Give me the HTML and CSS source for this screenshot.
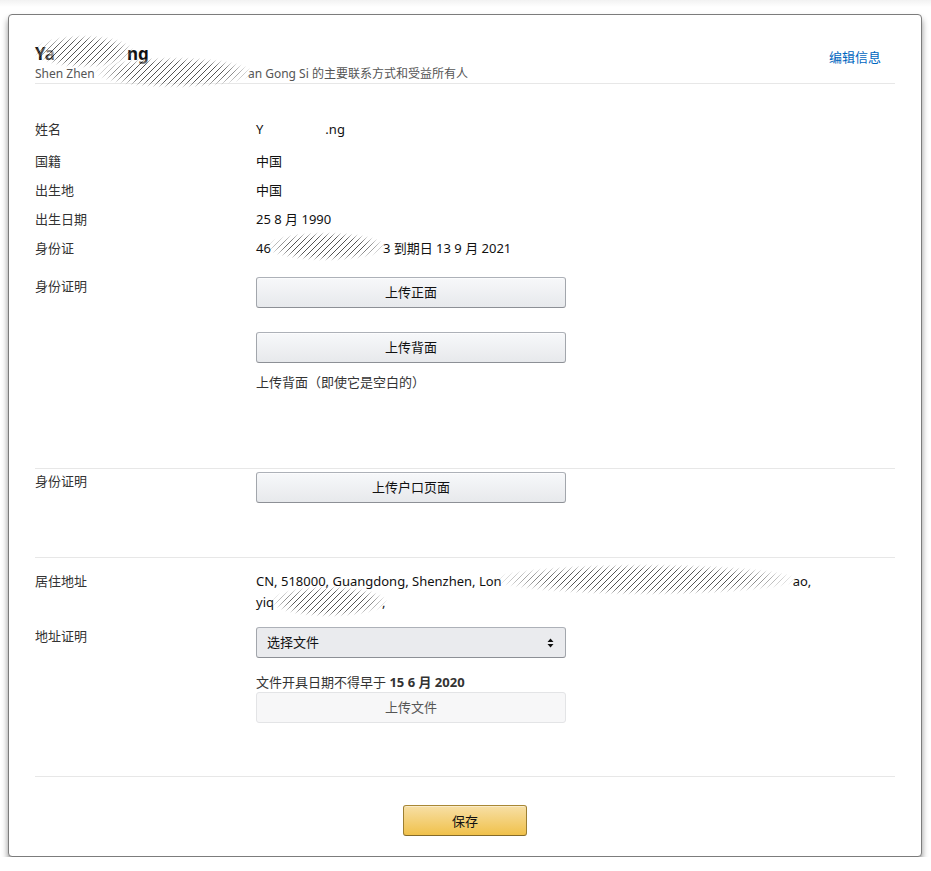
FILE: index.html
```html
<!DOCTYPE html>
<html lang="zh-CN">
<head>
<meta charset="utf-8">
<title>主要联系方式和受益所有人</title>
<link rel="stylesheet" href="styles.css">
</head>
<body>
<div class="card">
  <div class="head">
    <div class="head-text">
      <div class="title">Ya<span class="redact r-title"></span>ng</div>
      <div class="sub">Shen Zhen <span class="redact r-sub"></span>an Gong Si 的主要联系方式和受益所有人</div>
    </div>
    <a class="edit" href="#">编辑信息</a>
  </div>

  <div class="section s1">
    <div class="row r-name">
      <div class="label">姓名</div>
      <div class="value">Y<span class="gap"></span>.ng</div>
    </div>
    <div class="row">
      <div class="label">国籍</div>
      <div class="value">中国</div>
    </div>
    <div class="row">
      <div class="label">出生地</div>
      <div class="value">中国</div>
    </div>
    <div class="row">
      <div class="label">出生日期</div>
      <div class="value">25 8 月 1990</div>
    </div>
    <div class="row r-id">
      <div class="label">身份证</div>
      <div class="value">46<span class="redact r-idnum"></span>3 到期日 13 9 月 2021</div>
    </div>
    <div class="row">
      <div class="label">身份证明</div>
      <div class="value">
        <button class="btn">上传正面</button>
        <button class="btn btn-back">上传背面</button>
        <div class="note">上传背面（即使它是空白的）</div>
      </div>
    </div>
  </div>

  <div class="section s2">
    <div class="row">
      <div class="label">身份证明</div>
      <div class="value">
        <button class="btn">上传户口页面</button>
      </div>
    </div>
  </div>

  <div class="section s3">
    <div class="row r-addr">
      <div class="label">居住地址</div>
      <div class="value">CN, 518000, Guangdong, Shenzhen, Lon<span class="redact r-addr1"></span>ao,<br>yiq<span class="redact r-addr2"></span>,</div>
    </div>
    <div class="row">
      <div class="label">地址证明</div>
      <div class="value">
        <div class="select">
          <span>选择文件</span>
          <svg class="arrows" width="7" height="10" viewBox="0 0 7 10"><path d="M0.5 4 L3.5 0.5 L6.5 4 Z M0.5 6 L3.5 9.5 L6.5 6 Z" fill="#111"/></svg>
        </div>
        <div class="note note-date">文件开具日期不得早于 <b>15 6 月 2020</b></div>
        <button class="btn btn-disabled">上传文件</button>
      </div>
    </div>
  </div>

  <div class="foot">
    <button class="save">保存</button>
  </div>
</div>
</body>
</html>
```

FILE: styles.css
```css
html, body {
  margin: 0;
  padding: 0;
}

body {
  background: linear-gradient(#f2f2f2, #ffffff 7px) no-repeat #ffffff;
  font-family: "Noto Sans", "Noto Sans CJK SC", sans-serif;
  font-size: 13px;
  color: #111;
}

.card {
  margin: 14px 9px 0 8px;
  border: 1px solid #7c7c7c;
  border-radius: 4px;
  background: #fff;
  box-shadow: 0 5px 6px rgba(0, 0, 0, 0.45);
  padding: 0 26px 20px;
}

.head {
  display: flex;
  justify-content: space-between;
  align-items: flex-start;
  padding-top: 28px;
  padding-bottom: 1px;
  border-bottom: 1px solid #e7e7e7;
}

.title {
  font-size: 17px;
  font-weight: 700;
  line-height: 20px;
  color: #111;
}

.sub {
  margin-top: 2px;
  font-size: 12px;
  line-height: 16px;
  color: #555;
}

.edit {
  margin-top: 5px;
  margin-right: 14px;
  line-height: 19px;
  color: #0066c0;
  text-decoration: none;
}

.section {
  border-top: 1px solid #e7e7e7;
}

.head + .section {
  border-top: 0;
}

.s1 {
  padding-top: 36px;
  padding-bottom: 76px;
}

.s2 {
  padding-top: 3px;
  padding-bottom: 54px;
}

.s3 {
  padding-top: 13px;
  padding-bottom: 53px;
}

.row {
  display: grid;
  grid-template-columns: 221px 310px;
  align-items: start;
  line-height: 19px;
  margin-bottom: 10px;
}

.row:last-child {
  margin-bottom: 0;
}

.r-name {
  margin-bottom: 13px;
}

.r-id {
  margin-bottom: 19px;
}

.r-addr {
  grid-template-columns: 221px 1fr;
  line-height: 21px;
  margin-bottom: 14px;
}

.label {
  color: #333;
}

.value {
  color: #111;
}

.gap {
  display: inline-block;
  width: 62px;
}

.btn {
  display: block;
  width: 310px;
  height: 31px;
  margin: 0;
  padding: 0;
  border: 1px solid;
  border-color: #adb1b8 #a2a6ac #8d9096;
  border-radius: 3px;
  background: linear-gradient(#f7f8fa, #e7e9ec);
  box-shadow: inset 0 1px 0 rgba(255, 255, 255, 0.6);
  font-family: inherit;
  font-size: 13px;
  color: #111;
  line-height: 29px;
  text-align: center;
}

.btn-back {
  margin-top: 24px;
}

.note {
  margin-top: 10px;
  color: #333;
}

.btn-disabled {
  background: #f7f7f8;
  border-color: #e3e4e6;
  box-shadow: none;
  color: #555;
}

.note-date {
  margin-top: 15px;
}

.note-date b {
  font-weight: 700;
}

.select {
  display: flex;
  justify-content: space-between;
  align-items: center;
  box-sizing: border-box;
  width: 310px;
  height: 31px;
  padding: 0 11px 0 10px;
  border: 1px solid;
  border-color: #adb1b8 #a2a6ac #8d9096;
  border-radius: 3px;
  background: #eaebee;
  color: #111;
}

.arrows {
  display: block;
}

.foot {
  border-top: 1px solid #e7e7e7;
  padding-top: 28px;
  display: flex;
  justify-content: center;
}

.save {
  width: 124px;
  height: 31px;
  padding: 0;
  border: 1px solid;
  border-color: #a88734 #9c7e31 #846a29;
  border-radius: 3px;
  background: linear-gradient(#f7dfa5, #f0c14b);
  box-shadow: inset 0 1px 0 rgba(255, 255, 255, 0.4);
  font-family: inherit;
  font-size: 13px;
  color: #111;
}

/* redaction hatching over private text */
.redact {
  display: inline-block;
  position: relative;
  height: 1em;
  vertical-align: baseline;
}

.redact::after {
  content: "";
  position: absolute;
  background: repeating-linear-gradient(135deg, rgba(255, 255, 255, 0.6) 0 3.45px, rgba(40, 40, 40, 0.8) 3.45px 4.2426px);
  -webkit-mask-image: radial-gradient(closest-side, #000 60%, transparent 100%);
  mask-image: radial-gradient(closest-side, #000 60%, transparent 100%);
}

.r-title {
  width: 72px;
}

.r-title::after {
  left: -22px;
  right: -8px;
  top: -8px;
  bottom: -8px;
}

.r-sub {
  width: 150px;
}

.r-sub::after {
  left: -4px;
  right: -6px;
  top: -9px;
  bottom: -10px;
}

.r-idnum {
  width: 112px;
}

.r-idnum::after {
  left: -6px;
  right: -4px;
  top: -8px;
  bottom: -8px;
}

.r-addr1 {
  width: 291px;
}

.r-addr1::after {
  left: -10px;
  right: -6px;
  top: -9px;
  bottom: -9px;
}

.r-addr2 {
  width: 108px;
}

.r-addr2::after {
  left: -4px;
  right: -6px;
  top: -8px;
  bottom: -10px;
}
```
